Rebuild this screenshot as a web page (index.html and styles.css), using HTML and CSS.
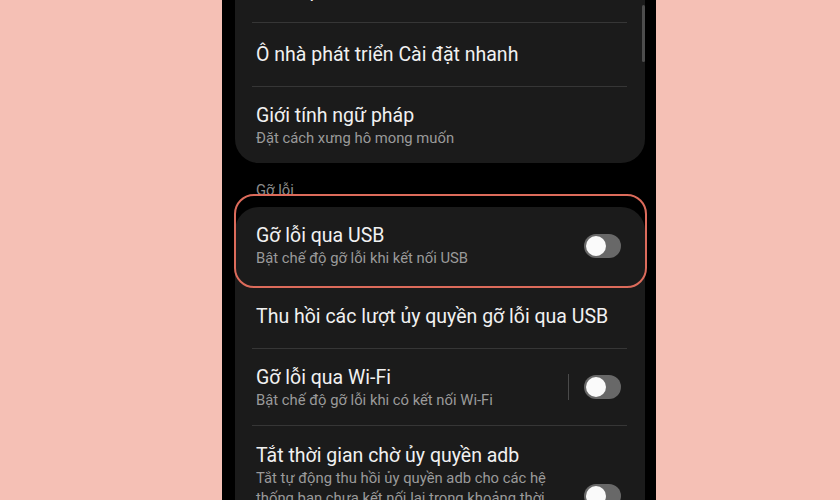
FILE: index.html
```
<!DOCTYPE html>
<html lang="vi">
<head>
<meta charset="utf-8">
<link rel="stylesheet" href="styles.css">
</head>
<body>
<div class="page">
  <div class="screen">
    <div class="card card-top">
      <div class="row row-cut"><div class="title">Chế độ demo</div></div>
      <div class="row single divided"><div class="title">Ô nhà phát triển Cài đặt nhanh</div></div>
      <div class="row double divided">
        <div class="text">
          <div class="title">Giới tính ngữ pháp</div>
          <div class="sub">Đặt cách xưng hô mong muốn</div>
        </div>
      </div>
    </div>
    <div class="section">Gỡ lỗi</div>
    <div class="card card-bottom">
      <div class="row double highlighted">
        <div class="text">
          <div class="title">Gỡ lỗi qua USB</div>
          <div class="sub">Bật chế độ gỡ lỗi khi kết nối USB</div>
        </div>
        <div class="toggle"><span class="thumb"></span></div>
        <div class="outline"></div>
      </div>
      <div class="row single"><div class="title">Thu hồi các lượt ủy quyền gỡ lỗi qua USB</div></div>
      <div class="row double divided">
        <div class="text">
          <div class="title">Gỡ lỗi qua Wi-Fi</div>
          <div class="sub">Bật chế độ gỡ lỗi khi có kết nối Wi-Fi</div>
        </div>
        <div class="vsep"></div>
        <div class="toggle"><span class="thumb"></span></div>
      </div>
      <div class="row tall divided">
        <div class="text">
          <div class="title">Tắt thời gian chờ ủy quyền adb</div>
          <div class="sub">Tắt tự động thu hồi ủy quyền adb cho các hệ thống bạn chưa kết nối lại trong khoảng thời gian mặc định (7 ngày) hoặc do người dùng định cấu hình (tối thiểu 1 ngày).</div>
        </div>
        <div class="toggle toggle-low"><span class="thumb"></span></div>
      </div>
    </div>
    <div class="scrollbar"></div>
  </div>
</div>
</body>
</html>
```
FILE: styles.css
```
html, body {
  margin: 0;
  padding: 0;
  height: 100%;
  overflow: hidden;
}
body {
  background: #f5c0b5;
  font-family: Roboto, "Noto Sans", sans-serif;
}
.page {
  display: flex;
  height: 100%;
  padding-left: 222px;
}
.screen {
  position: relative;
  width: 434px;
  height: 100%;
  background: #000;
  padding: 0 11px 0 13px;
  box-sizing: border-box;
  overflow: hidden;
}
.card {
  background: #1b1b1b;
  padding: 0 18px 0 17px;
}
.card-top {
  border-radius: 0 0 24px 24px;
}
.card-bottom {
  border-radius: 24px 24px 0 0;
  height: 400px;
}
.row {
  position: relative;
  display: flex;
  align-items: center;
  padding: 0 6px 0 4px;
  box-sizing: border-box;
}
.divided {
  border-top: 1px solid #363636;
}
.row-cut {
  height: 61px;
  margin-top: -39px;
  align-items: flex-start;
  padding-top: 18px;
}
.single {
  height: 64px;
}
.double {
  height: 77px;
}
.tall {
  height: 120px;
  align-items: flex-start;
  padding-top: 17px;
}
.text {
  flex: 1;
  min-width: 0;
}
.title {
  color: #f1f1f1;
  font-size: 19.5px;
  line-height: 25px;
  white-space: nowrap;
}
.sub {
  color: #9a9a9a;
  font-size: 14.8px;
  line-height: 20px;
}
.tall .sub {
  padding-right: 16px;
}
.section {
  color: #8c8c8c;
  font-size: 14.8px;
  line-height: 20px;
  padding: 17px 0 7px 21px;
}
.toggle {
  position: relative;
  flex: none;
  width: 37px;
  height: 24px;
  border-radius: 12px;
  background: #686868;
}
.thumb {
  position: absolute;
  left: 2px;
  top: 2px;
  width: 20px;
  height: 20px;
  border-radius: 50%;
  background: #fafafa;
}
.toggle-low {
  margin-top: 41px;
}
.vsep {
  flex: none;
  width: 1px;
  height: 26px;
  background: #4a4a4a;
  margin-right: 15px;
}
.outline {
  position: absolute;
  top: -13px;
  left: -18px;
  right: -20px;
  bottom: -4px;
  border: 2.5px solid #dc6b5b;
  border-radius: 20px;
  pointer-events: none;
}
.scrollbar {
  position: absolute;
  left: 420px;
  top: 5px;
  width: 3px;
  height: 57px;
  border-radius: 2px;
  background: #4d4d4d;
}
```
